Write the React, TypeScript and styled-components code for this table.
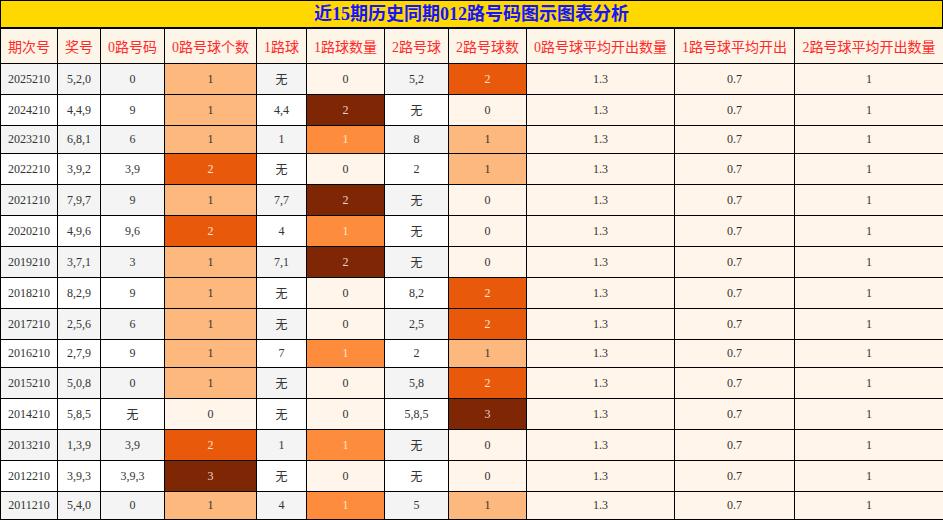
import React, { FC } from 'react';
import styled, { createGlobalStyle } from 'styled-components';

const GlobalStyle = createGlobalStyle`
  body {
    margin: 0;
    background: #ffffff;
    font-family: "Liberation Serif", "Noto Sans CJK SC", serif;
  }
`;

const Wrap = styled.div`
  width: 943px;
`;

const Title = styled.div`
  height: 26px;
  line-height: 26px;
  border: 1px solid #000;
  background: #ffd800;
  color: #1414ff;
  font-size: 18px;
  font-weight: bold;
  text-align: center;
  white-space: nowrap;
`;

const Table = styled.table`
  width: 943px;
  table-layout: fixed;
  border-collapse: collapse;
  font-family: "Liberation Serif", "Noto Sans CJK SC", serif;
`;

const Th = styled.th`
  height: 34px;
  padding: 0;
  border: 1px solid #000;
  background: #fdf5e8;
  color: #ff2a2a;
  font-size: 14px;
  font-weight: normal;
  white-space: nowrap;
  text-align: center;
`;

type Tone = 'plain' | 'grey' | 'cream' | 'heat';

const Td = styled.td<{ $tone: Tone; $bg?: string; $fg?: string }>`
  padding: 0 2px;
  border: 1px solid #000;
  font-size: 12px;
  text-align: center;
  white-space: nowrap;
  color: ${({ $fg }) => $fg || '#333'};
  background: ${({ $tone, $bg }) =>
    $tone === 'grey' ? '#f4f4f4' : $tone === 'cream' ? '#fff5eb' : $tone === 'heat' ? $bg : '#ffffff'};
`;

const Tr = styled.tr<{ $tall: boolean }>`
  height: ${({ $tall }) => ($tall ? '31px' : '28px')};
`;

const widths = [57, 43, 64, 92, 50, 78, 64, 78, 148, 120, 149];
const heads = [
  '期次号',
  '奖号',
  '0路号码',
  '0路号球个数',
  '1路球',
  '1路球数量',
  '2路号球',
  '2路号球数',
  '0路号球平均开出数量',
  '1路号球平均开出',
  '2路号球平均开出数量',
];

type Row = [string, string, string, number, string, number, string, number];

const rows: Row[] = [
  ['2025210', '5,2,0', '0', 1, '无', 0, '5,2', 2],
  ['2024210', '4,4,9', '9', 1, '4,4', 2, '无', 0],
  ['2023210', '6,8,1', '6', 1, '1', 1, '8', 1],
  ['2022210', '3,9,2', '3,9', 2, '无', 0, '2', 1],
  ['2021210', '7,9,7', '9', 1, '7,7', 2, '无', 0],
  ['2020210', '4,9,6', '9,6', 2, '4', 1, '无', 0],
  ['2019210', '3,7,1', '3', 1, '7,1', 2, '无', 0],
  ['2018210', '8,2,9', '9', 1, '无', 0, '8,2', 2],
  ['2017210', '2,5,6', '6', 1, '无', 0, '2,5', 2],
  ['2016210', '2,7,9', '9', 1, '7', 1, '2', 1],
  ['2015210', '5,0,8', '0', 1, '无', 0, '5,8', 2],
  ['2014210', '5,8,5', '无', 0, '无', 0, '5,8,5', 3],
  ['2013210', '1,3,9', '3,9', 2, '1', 1, '无', 0],
  ['2012210', '3,9,3', '3,9,3', 3, '无', 0, '无', 0],
  ['2011210', '5,4,0', '0', 1, '4', 1, '5', 1],
];

// oranges scale, picked by value relative to column max
const heat = (v: number, max: number): { bg: string; fg: string } => {
  if (v === 0) return { bg: '#fff5eb', fg: '#333' };
  const r = v / max;
  if (r >= 1) return { bg: '#7f2704', fg: '#e8d6cc' };
  if (r > 0.6) return { bg: '#e8590c', fg: '#fbe3d2' };
  if (r >= 0.5) return { bg: '#fd8d3c', fg: '#fee3cc' };
  return { bg: '#fdb97d', fg: '#333' };
};

const HeatCell: FC<{ v: number; max: number }> = ({ v, max }) => {
  const c = heat(v, max);
  return (
    <Td $tone="heat" $bg={c.bg} $fg={c.fg}>
      {v}
    </Td>
  );
};

const App: FC = () => {
  const max0 = Math.max(...rows.map((r) => r[3]));
  const max1 = Math.max(...rows.map((r) => r[5]));
  const max2 = Math.max(...rows.map((r) => r[7]));

  return (
    <Wrap>
      <GlobalStyle />
      <Title>近15期历史同期012路号码图示图表分析</Title>
      <Table>
        <colgroup>
          {widths.map((w, i) => (
            <col key={i} style={{ width: w }} />
          ))}
        </colgroup>
        <thead>
          <tr>
            {heads.map((h) => (
              <Th key={h}>{h}</Th>
            ))}
          </tr>
        </thead>
        <tbody>
          {rows.map((r, i) => {
            const tone: Tone = i % 2 === 0 ? 'grey' : 'plain';
            const tall = r.includes('无');
            return (
              <Tr key={r[0]} $tall={tall}>
                <Td $tone={tone}>{r[0]}</Td>
                <Td $tone={tone}>{r[1]}</Td>
                <Td $tone={tone}>{r[2]}</Td>
                <HeatCell v={r[3]} max={max0} />
                <Td $tone={tone}>{r[4]}</Td>
                <HeatCell v={r[5]} max={max1} />
                <Td $tone={tone}>{r[6]}</Td>
                <HeatCell v={r[7]} max={max2} />
                <Td $tone="cream">1.3</Td>
                <Td $tone="cream">0.7</Td>
                <Td $tone="cream">1</Td>
              </Tr>
            );
          })}
        </tbody>
      </Table>
    </Wrap>
  );
};

export default App;
